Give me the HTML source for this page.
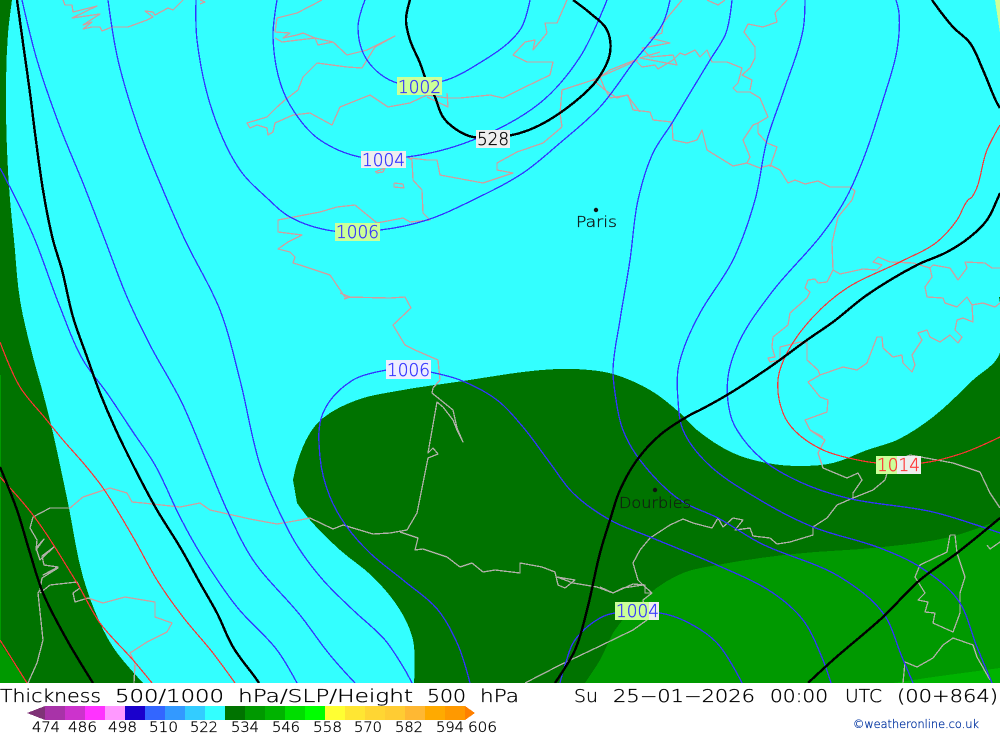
<!DOCTYPE html>
<html><head><meta charset="utf-8"><title>Thickness 500/1000 hPa/SLP/Height 500 hPa</title>
<style>
html,body{margin:0;padding:0;background:#fff;width:1000px;height:733px;overflow:hidden}
svg{display:block}
text{font-family:"DejaVu Sans","Liberation Sans",sans-serif;font-weight:200;stroke-width:.3px}
</style></head><body>
<svg id="m" width="1000" height="733" viewBox="0 0 1000 733" xmlns="http://www.w3.org/2000/svg">
<defs>
<clipPath id="map"><rect x="0" y="0" width="1000" height="683"/></clipPath>
<clipPath id="gr">
<polygon points="0,0 12,0 8,33 6,83 7,150 10,200 14,240 20,300 33,357 43,393 53,433 60,465 68,503 83,577 100,623 115,650 143,683 0,683"/>
<polygon points="293,480 297,463 310,433 323,418 357,400 397,391 463,381 523,372 557,369 590,370 613,374 650,390 680,413 697,430 733,453 767,463 800,466 833,463 867,450 897,440 933,417 973,380 1000,353 1000,683 414,683 413,640 400,610 373,577 340,550 310,520 297,503"/>
</clipPath>
<g id="c">
<polyline points="63,0 65,5 72,5 73,12 97,6 72,18 100,14 83,25 92,22 83,29 92,27 100,27 102,31 112,27 128,27 147,20 153,17 145,11 153,12 155,15 168,8 173,10 183,0"/>
<polyline points="200,0 205,2 200,4"/>
<polyline points="322,0 297,13 277,18 275,32 290,33 283,38 297,35 303,33 315,38 333,42 347,55 367,50 395,36 375,47 362,68 347,67 317,63 303,77 298,90 285,100 277,107 267,117 247,123 250,128 257,125 267,128 268,135 273,132 275,123 293,115 310,113 332,125 340,107 370,95 388,107 410,103 427,95 447,98 460,98 490,95 503,98 523,88 550,75 553,62 527,62 513,55 525,42 535,40 533,50 547,33 545,23 557,23 567,0"/>
<polyline points="427,97 448,107 447,93"/>
<polyline points="275,38 282,42 315,38 318,45 333,42"/>
<polyline points="407,157 412,160 413,180 422,190 423,213 430,220 410,222 403,218 377,223 355,205 337,207 320,212 278,220 278,232 302,235 288,242 278,249 290,252 295,257 293,263 300,265 330,275 345,297 390,298 405,297 411,308 393,325 405,345 415,350 438,360 440,380 433,388 432,393 453,410 457,428 463,442 457,430 453,420 443,407 437,402 428,453 433,448 438,454 428,458 417,513 407,530 390,533 373,534 343,525 333,529 310,518 300,520 277,524 250,519 210,510 200,503 180,507 143,503 132,502 127,493 110,488 83,497 70,508 50,508 33,517 30,528 37,540 36,550 44,539 36,548 40,560 54,547 42,556 44,565 58,567 43,575 58,568 42,578 40,590 38,593 43,640 37,663 28,683"/>
<polyline points="40,593 50,585 77,582 80,588 73,593 75,602 88,598 103,603 125,597 155,602 155,617 172,623 167,632 147,642 130,653 135,663 134,683"/>
<polyline points="400,532 418,538 415,550 423,549 447,557 460,567 472,563 483,572 495,570 520,573 520,563 542,567 555,572 558,585 565,588 575,580 557,577 573,583 597,587 613,593 623,588 643,585 652,593 643,600 647,620 633,630 600,646 560,665 525,683"/>
<polyline points="600,587 613,593 633,584 645,585 645,593 652,593"/>
<polyline points="643,585 638,580 633,563 640,550 650,538 670,525 683,519 693,523 712,528 718,518 723,527 733,518 743,520 735,530 750,528 753,536 770,538 777,544 790,542 813,535 813,527 827,518 837,505 853,498 853,493 862,480 858,473 847,478 823,468 818,453 825,440 810,430 823,437"/>
<polyline points="853,498 873,490 885,480 890,463 910,455 953,463 980,472 990,493 1000,508"/>
<polyline points="950,535 955,535 957,553 965,577 960,593 960,613 953,632 933,623 935,613 925,612 928,602 918,600 925,593 915,577 920,565 947,552 950,535"/>
<polyline points="903,683 905,662 917,667 933,658 943,645 953,638 973,645 977,657 990,680"/>
<polyline points="987,545 990,549 1000,542"/>
<polyline points="600,77 610,70 635,60 642,67 655,65 658,69 673,60 680,53 685,55 695,50 700,57 707,50 712,62 727,62 742,68 738,83 733,88 737,92 750,92 760,98 768,117 758,123 758,133 767,143 777,147 770,167"/>
<polyline points="758,123 753,125 743,140 750,157 747,163 733,166 707,150 702,130 697,140 687,143 673,140 672,122 653,120 650,112 633,110 628,95 610,98 604,87 600,77"/>
<polyline points="747,163 760,168 770,165 780,170 788,183 795,180 805,184 818,181 830,187 850,187 855,191 852,200 838,217 832,243 833,270 840,274 863,269 877,270 882,265 873,262 878,257 890,262 913,263 930,268 932,277 925,287 927,297 943,298 945,303 957,307 967,297 972,305 983,303 995,307 1000,303"/>
<polyline points="930,268 933,265 950,268 958,280 967,268 965,262 985,263 992,268 1000,268"/>
<polyline points="833,270 827,282 818,283 815,279 808,280 805,288 810,292 807,298 790,313 788,325 773,337 772,347 775,357 768,358 770,362 780,360 780,347 800,342 807,343 807,360 818,370 820,375 843,367 857,370 867,363 877,337 882,337 883,348 893,357 902,355 903,363 912,372 915,365 912,355 922,340 918,333 927,330 930,337 940,342 950,335 958,343 962,337 955,330 957,320 963,318 973,322 972,305"/>
<polyline points="820,375 808,382 820,397 828,400 827,412 805,420 810,430 823,437"/>
<polyline points="787,0 775,13 777,22 763,27 748,24 744,32 755,47 755,58 750,68 742,75 752,80 750,90"/>
<polyline points="707,0 718,5 725,0"/>
<polyline points="682,0 663,23 662,33 650,38 670,43 642,48 650,57 673,55 677,65 640,58 660,52"/>
<polyline points="562,127 560,113 562,90 593,80 638,60"/>
<polyline points="593,80 605,90 617,98 627,95 640,112"/>
<polyline points="562,127 543,143 517,152 497,163 497,170 513,173 483,183 440,175 437,160 427,160 410,158"/>
<polyline points="375,172 385,168 383,172 376,173"/>
<polyline points="394,183 403,184 404,188 394,187 394,183"/>
<polyline points="340,293 350,297 344,299"/>
</g>
</defs>
<g clip-path="url(#map)">
<rect width="1000" height="683" fill="#33ffff"/>
<g shape-rendering="crispEdges">
<polygon class="s" fill="#007300" points="0,0 12,0 8,33 6,83 7,150 10,200 14,240 20,300 33,357 43,393 53,433 60,465 68,503 83,577 100,623 115,650 143,683 0,683"/>
<polygon class="s" fill="#007300" points="293,480 297,463 310,433 323,418 357,400 397,391 463,381 523,372 557,369 590,370 613,374 650,390 680,413 697,430 733,453 767,463 800,466 833,463 867,450 897,440 933,417 973,380 999,355 999,297 1000,297 1000,683 414,683 413,640 400,610 373,577 340,550 310,520 297,503"/>
<polygon class="s" fill="#009900" points="585,683 600,660 615,630 650,593 683,573 717,565 793,554 883,547 950,537 1000,520 1000,683"/>
<polygon fill="#00b300" points="893,683 933,677 1000,668 1000,683"/>
<polygon fill="#009900" points="0,643 10,658 27,683 0,683"/>
<rect x="0" y="375" width="1" height="268" fill="#009900"/>
<polygon fill="#ccff99" points="995,0 1000,0 1000,33"/>
</g>
<g fill="none" stroke-linejoin="round" shape-rendering="crispEdges">
<use href="#c" stroke="#cf9f9f" stroke-width="1.3"/>
<use href="#c" stroke="#b0b0a8" stroke-width="1.3" clip-path="url(#gr)"/>
<g stroke="#ff3333" stroke-width="1.2">
<polyline class="s" points="0,342 20,387 45,418 63,440 85,465 103,488 133,537 157,580 183,617 213,653 235,683"/>
<polyline class="s" points="0,477 33,515 77,583 100,623 133,660 152,683"/>
<polyline class="s" points="0,640 27,683"/>
<polyline class="s" points="1000,125 987,150 972,197 968,200 957,220 937,242 900,262 847,288 813,317 787,353 778,380 783,413 795,431 823,450 853,459 877,463 922,463 963,453 1000,437"/>
</g>
<g stroke="#3333ff" stroke-width="1.3">
<polyline class="s" points="108,0 118,60 140,133 163,190 185,240 220,310 240,380 260,465 277,507 298,547 323,580 353,610 385,640 405,670 412,683"/>
<polyline class="s" points="22,0 37,60 60,127 83,183 105,240 127,297 150,345 182,403 208,465 227,510 253,560 300,615 330,655 355,683"/>
<polyline class="s" points="0,168 20,207 35,240 60,307 83,360 107,393 133,432 155,465 180,517 200,553 237,607 277,650 297,683"/>
<polyline class="s" points="196,0 197,40 213,113 240,170 267,198 290,217 333,231 380,230 427,220 473,200 523,173 560,143 600,107 633,63 663,23 670,0"/>
<polyline class="s" points="277,0 273,37 282,88 300,120 320,140 360,157 407,157 473,140 540,103 580,57 607,0"/>
<polyline class="s" points="365,0 358,27 367,60 397,83 443,81 473,67 520,30 530,0"/>
<polyline class="s" points="732,0 726,33 710,60 690,93 672,123 653,153 638,200 630,260 620,320 613,370 615,393 623,430 640,460 680,500 718,518 760,543 840,577 883,613 902,657 913,683"/>
<polyline class="s" points="805,0 803,30 783,93 767,140 755,200 733,260 700,313 685,345 678,370 678,400 683,430 707,463 760,500 813,527 880,548 920,567 958,600 977,647 992,683"/>
<polyline class="s" points="896,0 899,13 897,50 883,100 863,160 845,200 823,233 772,292 740,340 728,377 730,413 737,430 763,460 800,482 847,498 933,512 1000,533"/>
<polyline class="s" points="387,370 353,380 323,413 320,457 330,497 347,527 370,553 403,580 438,610 458,645 470,683"/>
<polyline class="s" points="430,372 460,380 497,400 523,427 550,463 573,493 610,520 650,537 717,565 773,593 803,620 823,660 831,683"/>
<polyline class="s" points="560,683 565,665 575,640 600,618 615,613 660,613 687,622 717,643 742,683"/>
</g>
<g stroke="#000" stroke-width="2.4">
<polyline class="s" points="17,0 23,43 30,93 35,133 43,190 53,240 62,270 73,317 87,357 100,393 115,428 133,465 157,510 180,547 200,583 217,613 233,647 257,680 259,683"/>
<polyline class="s" points="0,467 17,510 30,553 43,593 67,640 93,683"/>
<polyline class="s" points="410,0 406,20 410,40 420,63 425,77 435,97 443,117 457,130 473,137 512,135 540,125 577,100 597,80 610,53 607,30 590,13 573,0"/>
<polyline class="s" points="932,0 953,27 970,43 983,70 997,103 1000,108"/>
<polyline class="s" points="1000,193 997,200 987,220 970,237 947,252 917,265 867,295 833,322 807,340 770,367 727,395 700,410 690,415 660,435 637,460 620,490 610,520 600,553 587,610 575,650 555,683"/>
<polyline class="s" points="1000,518 957,553 920,580 883,617 833,660 808,683"/>
</g>
</g>
<g shape-rendering="crispEdges">
<rect x="397" y="77" width="45" height="18" fill="#ccff99"/>
<rect x="361" y="151" width="45" height="17" fill="#eeeeee"/>
<rect x="476" y="130" width="34" height="18" fill="#eeeeee"/>
<rect x="335" y="223" width="45" height="18" fill="#ccff99"/>
<rect x="386" y="360" width="45" height="19" fill="#eeeeff"/>
<rect x="876" y="456" width="21" height="18" fill="#ccff99"/>
<rect x="897" y="456" width="24" height="18" fill="#eeeeee"/>
<rect x="615" y="602" width="34" height="18" fill="#ccff99"/>
<rect x="649" y="602" width="10" height="18" fill="#eeeeee"/>
</g>
<g font-size="18">
<text x="398" y="93" fill="#3333ff" stroke="#3333ff" textLength="43" lengthAdjust="spacingAndGlyphs">1002</text>
<text x="362" y="166" fill="#3333ff" stroke="#3333ff" textLength="43" lengthAdjust="spacingAndGlyphs">1004</text>
<text x="477" y="145" fill="#000" stroke="#000" textLength="32" lengthAdjust="spacingAndGlyphs">528</text>
<text x="336" y="238" fill="#3333ff" stroke="#3333ff" textLength="43" lengthAdjust="spacingAndGlyphs">1006</text>
<text x="387" y="376" fill="#3333ff" stroke="#3333ff" textLength="43" lengthAdjust="spacingAndGlyphs">1006</text>
<text x="877" y="471" fill="#ff3333" stroke="#ff3333" textLength="43" lengthAdjust="spacingAndGlyphs">1014</text>
<text x="616" y="617" fill="#3333ff" stroke="#3333ff" textLength="43" lengthAdjust="spacingAndGlyphs">1004</text>
</g>
<circle cx="596" cy="210" r="2.2" fill="#111"/>
<text x="576" y="227" font-size="15" fill="#111" stroke="#111" textLength="41" lengthAdjust="spacingAndGlyphs">Paris</text>
<circle cx="655" cy="490" r="2.2" fill="#111"/>
<text x="619" y="508" font-size="15" fill="#112211" stroke="#112211" textLength="72" lengthAdjust="spacingAndGlyphs">Dourbies</text>
</g>
<g font-size="17.5" fill="#000" stroke="#000">
<text x="0" y="702" textLength="101" lengthAdjust="spacingAndGlyphs">Thickness</text>
<text x="115" y="702" textLength="109" lengthAdjust="spacingAndGlyphs">500/1000</text>
<text x="238" y="702" textLength="175" lengthAdjust="spacingAndGlyphs">hPa/SLP/Height</text>
<text x="427" y="702" textLength="39" lengthAdjust="spacingAndGlyphs">500</text>
<text x="480" y="702" textLength="39" lengthAdjust="spacingAndGlyphs">hPa</text>
<text x="574" y="702" textLength="24" lengthAdjust="spacingAndGlyphs">Su</text>
<text x="613" y="702" textLength="142" lengthAdjust="spacingAndGlyphs">25−01−2026</text>
<text x="770" y="702" textLength="58" lengthAdjust="spacingAndGlyphs">00:00</text>
<text x="845" y="702" textLength="37" lengthAdjust="spacingAndGlyphs">UTC</text>
<text x="897" y="702" textLength="101" lengthAdjust="spacingAndGlyphs">(00+864)</text>
</g>
<g shape-rendering="crispEdges">
<polygon points="27,713 45,706 45,720" fill="#7f3377"/>
<rect x="45" y="706" width="20" height="14" fill="#a833a8"/>
<rect x="65" y="706" width="20" height="14" fill="#cc33cc"/>
<rect x="85" y="706" width="20" height="14" fill="#ff33ff"/>
<rect x="105" y="706" width="20" height="14" fill="#ff99ff"/>
<rect x="125" y="706" width="20" height="14" fill="#1a00cc"/>
<rect x="145" y="706" width="20" height="14" fill="#3366ff"/>
<rect x="165" y="706" width="20" height="14" fill="#3399ff"/>
<rect x="185" y="706" width="20" height="14" fill="#33ccff"/>
<rect x="205" y="706" width="20" height="14" fill="#33ffff"/>
<rect x="225" y="706" width="20" height="14" fill="#007300"/>
<rect x="245" y="706" width="20" height="14" fill="#009900"/>
<rect x="265" y="706" width="20" height="14" fill="#00b300"/>
<rect x="285" y="706" width="20" height="14" fill="#00dd00"/>
<rect x="305" y="706" width="20" height="14" fill="#00ff00"/>
<rect x="325" y="706" width="20" height="14" fill="#ffff33"/>
<rect x="345" y="706" width="20" height="14" fill="#ffe633"/>
<rect x="365" y="706" width="20" height="14" fill="#ffd633"/>
<rect x="385" y="706" width="20" height="14" fill="#ffcc33"/>
<rect x="405" y="706" width="20" height="14" fill="#ffb833"/>
<rect x="425" y="706" width="20" height="14" fill="#ffaa00"/>
<rect x="445" y="706" width="20" height="14" fill="#ff9900"/>
<polygon points="465,706 475,713 465,720" fill="#ff8000"/>
</g>
<g font-size="14.5" fill="#000" stroke="#000">
<text x="32" y="732" textLength="28" lengthAdjust="spacingAndGlyphs">474</text>
<text x="68" y="732" textLength="29" lengthAdjust="spacingAndGlyphs">486</text>
<text x="108" y="732" textLength="29" lengthAdjust="spacingAndGlyphs">498</text>
<text x="149" y="732" textLength="29" lengthAdjust="spacingAndGlyphs">510</text>
<text x="190" y="732" textLength="28" lengthAdjust="spacingAndGlyphs">522</text>
<text x="231" y="732" textLength="28" lengthAdjust="spacingAndGlyphs">534</text>
<text x="272" y="732" textLength="28" lengthAdjust="spacingAndGlyphs">546</text>
<text x="313" y="732" textLength="29" lengthAdjust="spacingAndGlyphs">558</text>
<text x="354" y="732" textLength="28" lengthAdjust="spacingAndGlyphs">570</text>
<text x="395" y="732" textLength="28" lengthAdjust="spacingAndGlyphs">582</text>
<text x="436" y="732" textLength="28" lengthAdjust="spacingAndGlyphs">594</text>
<text x="468" y="732" textLength="29" lengthAdjust="spacingAndGlyphs">606</text>
</g>
<text x="853" y="728" font-size="11.5" fill="#0033a0" stroke="#0033a0" textLength="126" lengthAdjust="spacingAndGlyphs">©weatheronline.co.uk</text>
</svg>
<script>
(function(){
var N='http://www.w3.org/2000/svg';
document.querySelectorAll('#m .s').forEach(function(el){
  var closed=el.tagName==='polygon';
  var a=el.getAttribute('points').trim().split(/\s+/).map(function(s){return s.split(',').map(Number)});
  var n=a.length,t=[];
  for(var i=0;i<n;i++){
    if(i===0||i===n-1){t.push([0,0]);continue}
    var ux=a[i][0]-a[i-1][0],uy=a[i][1]-a[i-1][1],vx=a[i+1][0]-a[i][0],vy=a[i+1][1]-a[i][1];
    var lu=Math.hypot(ux,uy)||1,lv=Math.hypot(vx,vy)||1;
    if((ux*vx+uy*vy)/(lu*lv)<0.6){t.push([0,0]);continue}
    var dx=ux/lu+vx/lv,dy=uy/lu+vy/lv,l=Math.hypot(dx,dy)||1;
    t.push([dx/l,dy/l]);
  }
  var d='M'+a[0][0]+' '+a[0][1];
  for(var j=0;j<n-1;j++){
    var L=Math.hypot(a[j+1][0]-a[j][0],a[j+1][1]-a[j][1])/3;
    d+='C'+(a[j][0]+t[j][0]*L).toFixed(1)+' '+(a[j][1]+t[j][1]*L).toFixed(1)+' '+(a[j+1][0]-t[j+1][0]*L).toFixed(1)+' '+(a[j+1][1]-t[j+1][1]*L).toFixed(1)+' '+a[j+1][0]+' '+a[j+1][1];
  }
  if(closed)d+='Z';
  var p=document.createElementNS(N,'path');
  p.setAttribute('d',d);
  var f=el.getAttribute('fill');if(f)p.setAttribute('fill',f);
  el.parentNode.replaceChild(p,el);
});
})();
</script>
</body></html>
